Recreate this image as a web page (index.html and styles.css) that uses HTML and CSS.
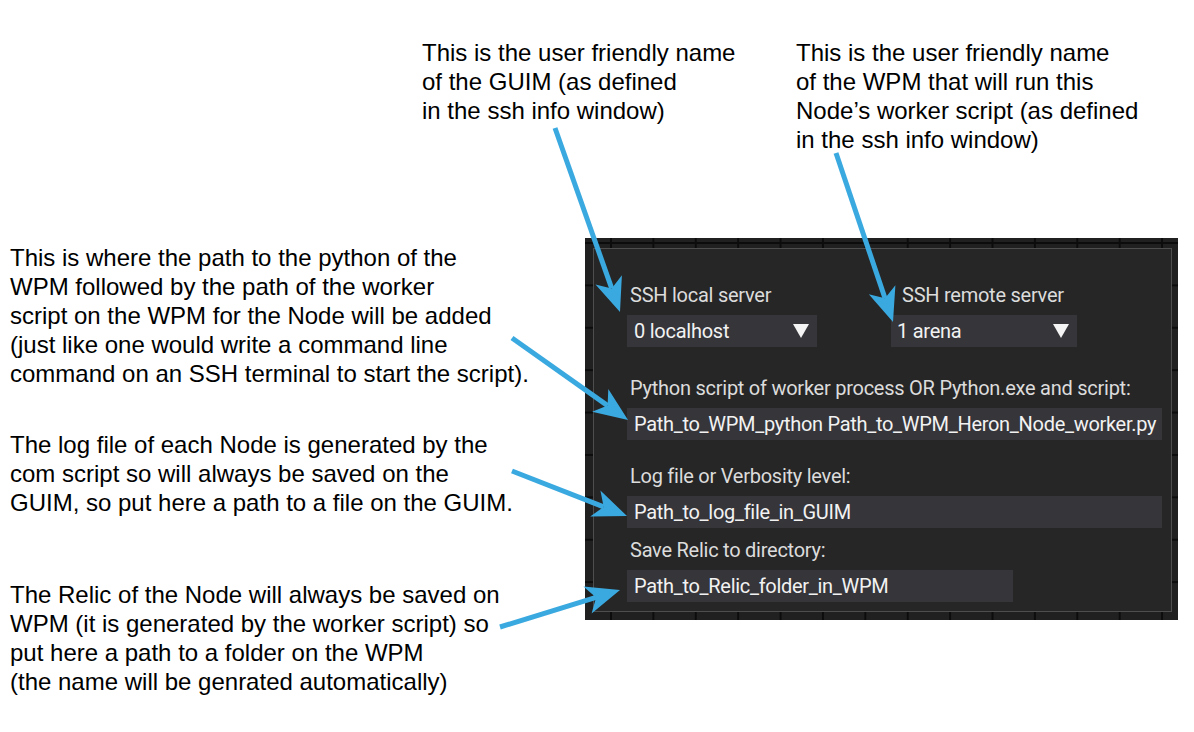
FILE: index.html
```html
<!DOCTYPE html>
<html lang="en">
<head>
<meta charset="utf-8">
<title>Node parameters annotated</title>
<link rel="stylesheet" href="styles.css">
</head>
<body>
<div class="figure">
  <div class="top-row">
    <p class="note note-guim">This is the user friendly name<br>of the GUIM (as defined<br>in the ssh info window)</p>
    <p class="note note-wpm">This is the user friendly name<br>of the WPM that will run this<br>Node’s worker script (as defined<br>in the ssh info window)</p>
  </div>
  <div class="main-row">
    <div class="notes-col">
      <p class="note note-path">This is where the path to the python of the<br>WPM followed by the path of the worker<br>script on the WPM for the Node will be added<br>(just like one would write a command line<br>command on an SSH terminal to start the script).</p>
      <p class="note note-log">The log file of each Node is generated by the<br>com script so will always be saved on the<br>GUIM, so put here a path to a file on the GUIM.</p>
      <p class="note note-relic">The Relic of the Node will always be saved on<br>WPM (it is generated by the worker script) so<br>put here a path to a folder on the WPM<br>(the name will be genrated automatically)</p>
    </div>
    <div class="editor">
      <div class="node">
        <div class="combo-row">
          <div class="field field-local">
            <div class="label">SSH local server</div>
            <div class="frame combo combo-local"><span>0 localhost</span><span class="tri"></span></div>
          </div>
          <div class="field field-remote">
            <div class="label">SSH remote server</div>
            <div class="frame combo combo-remote"><span>1 arena</span><span class="tri"></span></div>
          </div>
        </div>
        <div class="field field-python">
          <div class="label">Python script of worker process OR Python.exe and script:</div>
          <div class="frame input input-wide">Path_to_WPM_python Path_to_WPM_Heron_Node_worker.py</div>
        </div>
        <div class="field field-log">
          <div class="label">Log file or Verbosity level:</div>
          <div class="frame input input-wide">Path_to_log_file_in_GUIM</div>
        </div>
        <div class="field field-relic">
          <div class="label">Save Relic to directory:</div>
          <div class="frame input input-short">Path_to_Relic_folder_in_WPM</div>
        </div>
      </div>
    </div>
  </div>
  <svg class="arrows" width="1194" height="732" viewBox="0 0 1194 732">
    <g class="arrow-line">
      <line x1="555" y1="128" x2="611.7" y2="288.4"/>
      <line x1="836" y1="153" x2="885" y2="298.3"/>
      <line x1="512" y1="338" x2="607.6" y2="405.6"/>
      <line x1="512" y1="471" x2="603.7" y2="506.9"/>
      <line x1="500" y1="627" x2="596.1" y2="597.4"/>
    </g>
    <g class="arrow-head">
      <polygon points="620,312 595.5,284.6 611.7,288.4 621.9,275.2"/>
      <polygon points="893,322 868.8,294.3 885,298.3 895.4,285.3"/>
      <polygon points="628,420 592.1,411.8 607.6,405.6 608.3,389"/>
      <polygon points="627,516 590.2,516.6 603.7,506.9 600.4,490.6"/>
      <polygon points="620,590 591.6,613.4 596.1,597.4 583.4,586.6"/>
    </g>
  </svg>
</div>
</body>
</html>
```

FILE: styles.css
```css
html, body {
  margin: 0;
  padding: 0;
  background: #ffffff;
}

.figure {
  position: relative;
  width: 1194px;
  height: 732px;
  overflow: hidden;
  font-family: "Liberation Sans", Arial, sans-serif;
  color: #000;
}

.note {
  margin: 0;
  font-size: 24px;
  line-height: 29px;
  white-space: nowrap;
}

.top-row {
  display: flex;
  padding-top: 38px;
}

.note-guim {
  margin-left: 422px;
  width: 374px;
}

.main-row {
  display: flex;
  margin-top: 84px;
}

.notes-col {
  flex: 0 0 585px;
  padding-left: 10px;
  box-sizing: border-box;
  display: flex;
  flex-direction: column;
}

.note-path { margin-top: 5px; }
.note-log { margin-top: 42px; }
.note-relic { margin-top: 63px; }

.editor {
  flex: 0 0 593px;
  height: 382px;
  box-sizing: border-box;
  padding: 10px 6px 8px 8px;
  background-color: #202020;
  background-image:
    linear-gradient(to right, #0c0c0c 2px, transparent 2px),
    linear-gradient(to bottom, #0c0c0c 2px, transparent 2px);
  background-size: 42.4px 42.4px;
  background-position: 25px 4px;
}

.node {
  height: 100%;
  box-sizing: border-box;
  background: #262626;
  border: 1px solid #4e4e4e;
  padding: 34px 0 0 33px;
  font-family: Roboto, "Noto Sans", sans-serif;
  font-size: 20px;
  letter-spacing: -0.25px;
}

.combo-row {
  display: flex;
  gap: 74px;
}

.field {
  display: flex;
  flex-direction: column;
}

.label {
  height: 24px;
  line-height: 24px;
  color: #dcdcdc;
  padding-left: 3px;
  margin-bottom: 8px;
  white-space: nowrap;
}

.frame {
  height: 32px;
  line-height: 32px;
  box-sizing: border-box;
  background: #35353a;
  color: #f2f2f2;
  padding-left: 7px;
  white-space: nowrap;
}

.input {
  letter-spacing: -0.3px;
}

.combo {
  display: flex;
  align-items: center;
  justify-content: space-between;
  padding-right: 8px;
}

.combo-local { width: 190px; }
.combo-remote { width: 186px; }

.field-remote .label { padding-left: 11px; }
.combo-remote { padding-left: 6px; }

.tri {
  width: 0;
  height: 0;
  border-left: 8px solid transparent;
  border-right: 8px solid transparent;
  border-top: 14px solid #f4f4f4;
}

.field-python { margin-top: 29px; }
.field-log { margin-top: 24px; }
.field-relic { margin-top: 10px; }

.input-wide { width: 535px; }
.input-short { width: 386px; }

.arrows {
  position: absolute;
  left: 0;
  top: 0;
  pointer-events: none;
}

.arrow-line line {
  stroke: #3aa9e0;
  stroke-width: 5;
}

.arrow-head polygon {
  fill: #3aa9e0;
}
```
